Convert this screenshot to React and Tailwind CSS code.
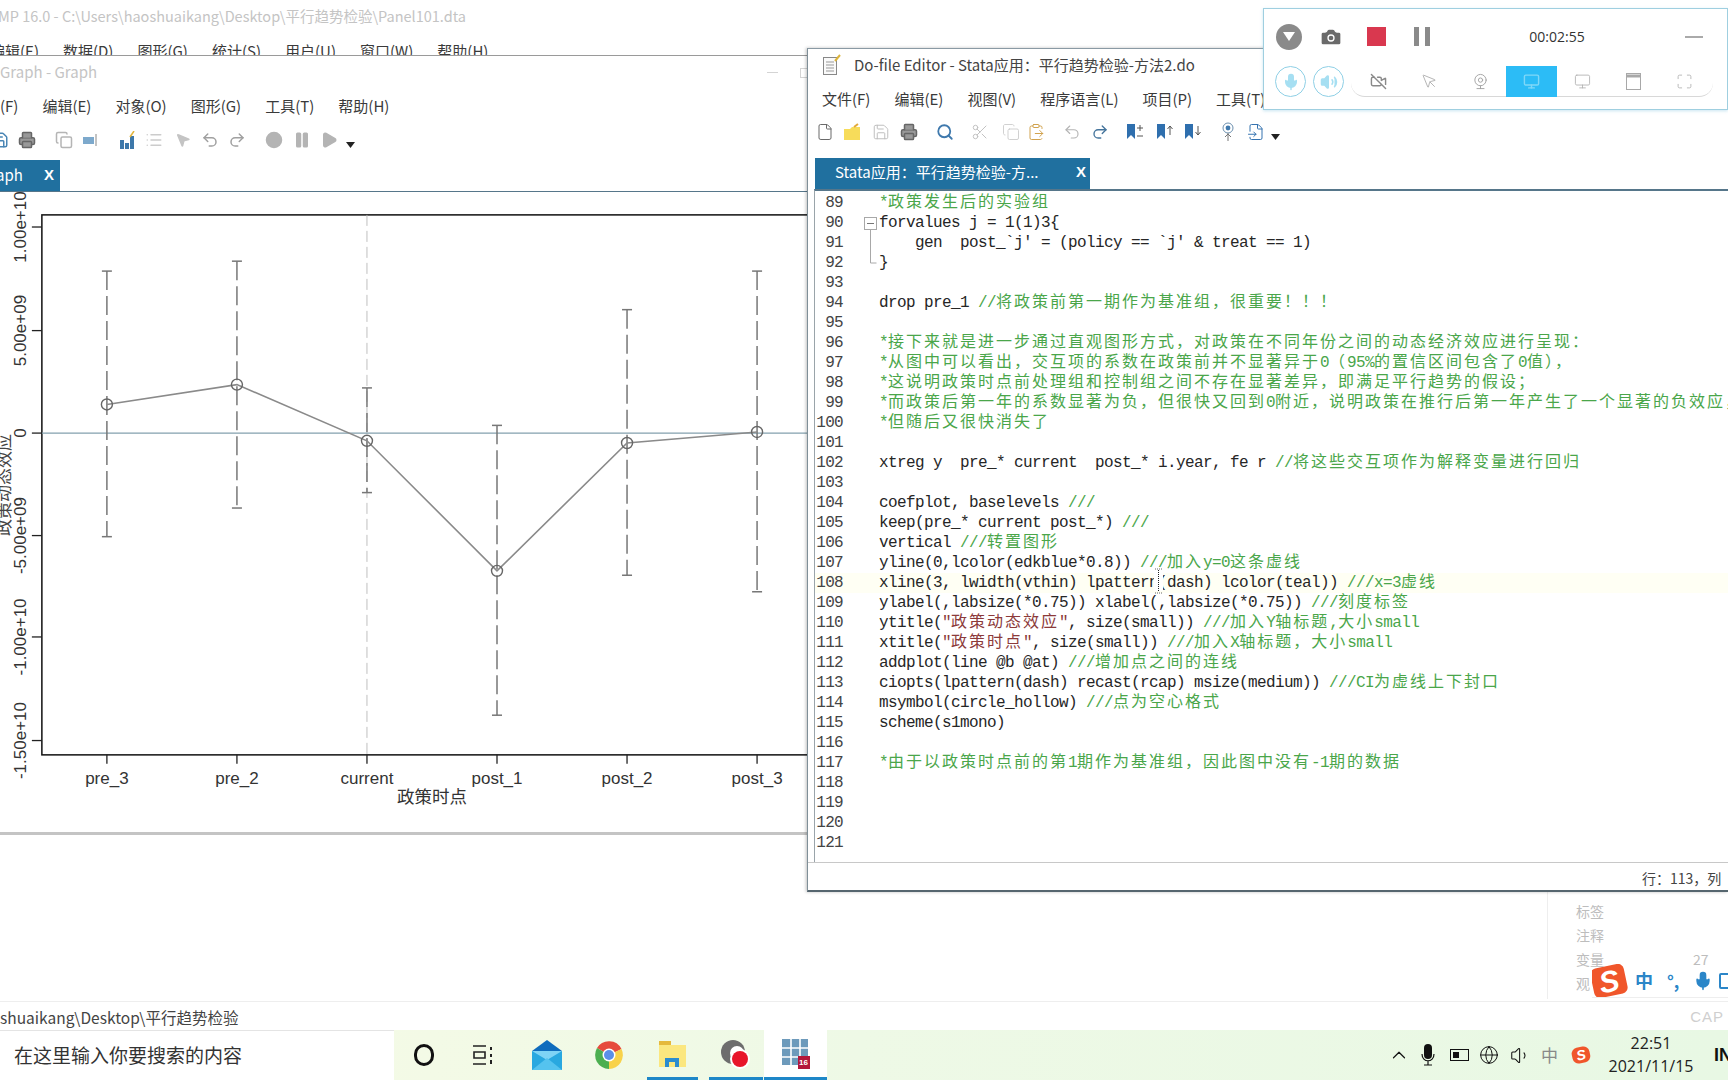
import React from "react";
import {
  File, Save, Printer, Search, Scissors, Copy, ClipboardPaste, Undo2, Redo2, Camera, Mic, Volume2, VideoOff,
  MousePointer2, Webcam, Monitor, Maximize, ChevronUp, Globe, Volume1, MousePointer, FileInput, Pause, Play, Circle, List,
} from "lucide-react";

const UI = "font-['Noto_Sans_CJK_SC','Open_Sans',sans-serif]";
const s = (v) => v * 1.102;

const CODE = [
  "*政策发生后的实验组",
  "forvalues j = 1(1)3{",
  "    gen  post_`j' = (policy == `j' & treat == 1)",
  "}",
  "",
  "drop pre_1 //将政策前第一期作为基准组，很重要！！！",
  "",
  "*接下来就是进一步通过直观图形方式，对政策在不同年份之间的动态经济效应进行呈现：",
  "*从图中可以看出，交互项的系数在政策前并不显著异于0（95%的置信区间包含了0值），",
  "*这说明政策时点前处理组和控制组之间不存在显著差异，即满足平行趋势的假设；",
  "*而政策后第一年的系数显著为负，但很快又回到0附近，说明政策在推行后第一年产生了一个显著的负效应，",
  "*但随后又很快消失了",
  "",
  "xtreg y  pre_* current  post_* i.year, fe r //将这些交互项作为解释变量进行回归",
  "",
  "coefplot, baselevels ///",
  "keep(pre_* current post_*) ///",
  "vertical ///转置图形",
  "yline(0,lcolor(edkblue*0.8)) ///加入y=0这条虚线",
  "xline(3, lwidth(vthin) lpattern(dash) lcolor(teal)) ///x=3虚线",
  "ylabel(,labsize(*0.75)) xlabel(,labsize(*0.75)) ///刻度标签",
  'ytitle("政策动态效应", size(small)) ///加入Y轴标题,大小small',
  'xtitle("政策时点", size(small)) ///加入X轴标题，大小small',
  "addplot(line @b @at) ///增加点之间的连线",
  "ciopts(lpattern(dash) recast(rcap) msize(medium)) ///CI为虚线上下封口",
  "msymbol(circle_hollow) ///点为空心格式",
  "scheme(s1mono)",
  "",
  "*由于以政策时点前的第1期作为基准组，因此图中没有-1期的数据",
  "",
  "",
  "",
  "",
];

function Runs({ text }) {
  const parts = text.split(/([\u3000-\u303f\u4e00-\u9fff\uff00-\uffef]+)/);
  return parts.map((p, i) =>
    p === "" ? null : i % 2 === 1 ? (
      <span key={i} className="font-['Noto_Sans_CJK_SC',sans-serif] text-[16px] leading-[0] tracking-[2px]">{p}</span>
    ) : (
      <span key={i} className="tracking-[-0.6px]">{p}</span>
    )
  );
}

function CodeText({ line }) {
  let code = line;
  let comment = "";
  if (line.startsWith("*")) {
    code = "";
    comment = line;
  } else {
    const k = line.indexOf("//");
    if (k >= 0) {
      code = line.slice(0, k);
      comment = line.slice(k);
    }
  }
  const bits = code.split(/("[^"]*")/);
  return (
    <>
      {bits.map((b, i) => (
        <span key={i} className={i % 2 === 1 ? "text-[#8c3a3a]" : "text-[#262626]"}>
          <Runs text={b} />
        </span>
      ))}
      {comment && (
        <span className="text-[#4aa64a]">
          <Runs text={comment} />
        </span>
      )}
    </>
  );
}

function Fold({ n }) {
  if (n === 90)
    return (
      <svg width="36" height="20" className="shrink-0">
        <rect x="21.5" y="4.5" width="12" height="12" fill="#fff" stroke="#a8a8a8" />
        <path d="M24 10.5h7" stroke="#777" />
        <path d="M27.5 17v3" stroke="#a8a8a8" />
      </svg>
    );
  if (n === 91)
    return (
      <svg width="36" height="20" className="shrink-0">
        <path d="M27.5 0v20" stroke="#a8a8a8" />
      </svg>
    );
  if (n === 92)
    return (
      <svg width="36" height="20" className="shrink-0">
        <path d="M27.5 0v10h6" fill="none" stroke="#a8a8a8" />
      </svg>
    );
  return <div className="w-[36px] shrink-0" />;
}

function Chart() {
  const xs = [97, 215, 333, 451, 569, 687];
  const names = ["pre_3", "pre_2", "current", "post_1", "post_2", "post_3"];
  const pts = [367, 349, 400, 518, 402, 392];
  const ci = [[246, 487], [237, 461], [352, 447], [386, 649], [281, 522], [246, 537]];
  const ticks = [[206, "1.00e+10"], [300, "5.00e+09"], [393, "0"], [486, "-5.00e+09"], [578, "-1.00e+10"], [672, "-1.50e+10"]];
  const Y = (v) => s(v) - 192;
  const X = (v) => s(v);
  const font = "Liberation Sans, sans-serif";
  return (
    <svg width="807" height="640" className="block">
      <rect x={X(38)} y={Y(195)} width="800" height={s(490)} fill="#fff" stroke="#111" strokeWidth="1.5" />
      <line x1={X(333)} x2={X(333)} y1={Y(195)} y2={Y(685)} stroke="#b8b8b8" strokeWidth="0.9" strokeDasharray="11 5" />
      <line x1={X(38)} x2="807" y1={Y(393)} y2={Y(393)} stroke="#83a0ae" strokeWidth="1.3" />
      {ticks.map(([y, t]) => (
        <g key={t}>
          <line x1={X(38) - 10} x2={X(38)} y1={Y(y)} y2={Y(y)} stroke="#222" strokeWidth="1.3" />
          <text transform={`translate(${X(18) + 6} ${Y(y)}) rotate(-90)`} textAnchor="middle" fontFamily={font} fontSize="17" fill="#333">{t}</text>
        </g>
      ))}
      <text transform={`translate(10 ${Y(440)}) rotate(-90)`} textAnchor="middle" fontFamily="Noto Sans CJK SC, sans-serif" fontSize="17" fill="#444">政策动态效应</text>
      {xs.map((x, i) => (
        <g key={x}>
          <line x1={X(x)} x2={X(x)} y1={Y(685)} y2={Y(685) + 9} stroke="#222" strokeWidth="1.3" />
          <text x={X(x)} y={Y(711)} textAnchor="middle" fontFamily={font} fontSize="17" fill="#333">{names[i]}</text>
          <line x1={X(x)} x2={X(x)} y1={Y(ci[i][0])} y2={Y(ci[i][1])} stroke="#777" strokeWidth="1.5" strokeDasharray="19 6" />
          <line x1={X(x) - 5} x2={X(x) + 5} y1={Y(ci[i][0])} y2={Y(ci[i][0])} stroke="#777" strokeWidth="1.5" />
          <line x1={X(x) - 5} x2={X(x) + 5} y1={Y(ci[i][1])} y2={Y(ci[i][1])} stroke="#777" strokeWidth="1.5" />
        </g>
      ))}
      <polyline points={xs.map((x, i) => `${X(x)},${Y(pts[i])}`).join(" ")} fill="none" stroke="#8a8a8a" strokeWidth="1.6" />
      {xs.map((x, i) => (
        <circle key={x} cx={X(x)} cy={Y(pts[i])} r="5.5" fill="none" stroke="#666" strokeWidth="1.4" />
      ))}
      <text x={X(392)} y={Y(729)} textAnchor="middle" fontFamily="Noto Sans CJK SC, sans-serif" fontSize="17.5" fill="#333">政策时点</text>
    </svg>
  );
}

const Caret = ({ cls }) => (
  <svg width="9" height="6" className={cls}>
    <path d="M0 0h9L4.5 6z" fill="#222" />
  </svg>
);

function Mark({ d, cls }) {
  return (
    <svg width="18" height="18" className={cls} fill="none">
      <path d="M1 1h8v15L5 12l-4 4z" fill="#2f6fae" />
      <path d={d} stroke="#555" />
    </svg>
  );
}

function Mail() {
  return (
    <svg width="32" height="30" viewBox="0 0 32 30">
      <path d="M1 11 16 0l15 11v3H1z" fill="#0f6cbd" />
      <rect x="1" y="11" width="30" height="19" fill="#7fd3f5" />
      <path d="M1 11 16 20 31 11v19H1z" fill="#29a8e0" />
      <path d="M1 30 16 18l15 12z" fill="#55c3ef" />
    </svg>
  );
}

function Chrome() {
  return (
    <svg width="28" height="28" viewBox="0 0 28 28">
      <path d="M14 14 2 7A14 14 0 0 1 26.5 8z" fill="#e64a3c" />
      <path d="M14 14 26.5 8A14 14 0 0 1 14 28z" fill="#f8d24a" />
      <path d="M14 14 14 28A14 14 0 0 1 2 7z" fill="#4caf50" />
      <circle cx="14" cy="14" r="6.5" fill="#fff" />
      <circle cx="14" cy="14" r="5" fill="#5b8fe8" />
    </svg>
  );
}

function Folder() {
  return (
    <svg width="28" height="28" viewBox="0 0 28 28">
      <rect x="1" y="1" width="12" height="5" fill="#e5b93c" />
      <rect x="1" y="5" width="27" height="22" fill="#fbe77f" />
      <path d="M7 27V18h14v9h-4v-5h-6v5z" fill="#2b8ccf" />
    </svg>
  );
}

function Rec() {
  return (
    <svg width="32" height="32" viewBox="0 0 32 32">
      <circle cx="13" cy="14" r="12" fill="#6d6d6d" />
      <circle cx="17" cy="15" r="7" fill="#fff" />
      <circle cx="20" cy="21" r="10" fill="#fff" />
      <circle cx="20" cy="21" r="8" fill="#e8152a" />
    </svg>
  );
}

function Grid16() {
  return (
    <div className="relative w-[28px] h-[30px]">
      <svg width="28" height="28" viewBox="0 0 28 28">
        <rect width="26" height="26" fill="#6d9abb" />
        <path d="M9 0v26M18 0v26M0 9h26M0 18h26" stroke="#fff" strokeWidth="1.6" />
      </svg>
      <div className="absolute right-0 bottom-0 w-[12px] h-[13px] bg-[#b3163a] text-white text-[8px] leading-[13px] text-center font-bold font-['Liberation_Sans',sans-serif]">16</div>
    </div>
  );
}

function SogouS({ cls, text }) {
  return (
    <div className={`flex items-center justify-center rounded-[6px] bg-[#f0562b] rotate-[-12deg] font-['Liberation_Sans',sans-serif] font-bold italic text-white ${cls} ${text}`}>S</div>
  );
}

const Menu = ({ items, cls }) => (
  <div className={`flex items-center gap-[24px] text-[15px] text-[#3a3a3a] ${cls}`}>
    {items.map((m) => (
      <span key={m} className="whitespace-nowrap">{m}</span>
    ))}
  </div>
);

export default function App() {
  return (
    <div className={`relative flex flex-col w-[1728px] h-[1080px] overflow-hidden bg-white ${UI}`}>
      {/* Background Stata window */}
      <div className="h-[33px] shrink-0 flex items-center -ml-[2px] pb-[2px] text-[14.5px] text-[#c4c4c4] whitespace-nowrap">MP 16.0 - C:\Users\haoshuaikang\Desktop\平行趋势检验\Panel101.dta</div>
      <div className="h-[32px] shrink-0 pt-[7px]">
        <Menu cls="-ml-[10px]" items={["编辑(E)", "数据(D)", "图形(G)", "统计(S)", "用户(U)", "窗口(W)", "帮助(H)"]} />
      </div>
      <div className="flex-1 flex justify-end items-end">
        <div className="w-[181px] h-[107px] mb-[2px] border-l border-[#eeeeee] pl-[28px] text-[14px] text-[#bdbdbd] flex flex-col">
          <div className="h-[7px] shrink-0" />
          <div className="h-[24px] leading-[24px]">标签</div>
          <div className="h-[24px] leading-[24px]">注释</div>
          <div className="h-[24px] leading-[24px] flex">变量<span className="ml-[89px]">27</span></div>
          <div className="h-[24px] leading-[24px]">观</div>
        </div>
      </div>
      <div className="h-[29px] shrink-0 border-t border-[#eeeeee] pt-[3px] flex items-center justify-between text-[15.5px] text-[#444]">
        <span>shuaikang\Desktop\平行趋势检验</span>
        <span className="text-[#cfcfcf] mr-[4px] font-['Liberation_Sans',sans-serif] text-[15px] tracking-[1px]">CAP</span>
      </div>

      {/* Taskbar */}
      <div className="h-[50px] shrink-0 flex items-stretch bg-gradient-to-r from-[#f8fbe6] via-[#eef9e6] to-[#e8f8e4]">
        <div className="w-[394px] bg-white border-t border-[#e4e4e4] flex items-center pl-[14px] text-[19px] text-[#333]">在这里输入你要搜索的内容</div>
        <div className="w-[60px] flex items-center justify-center">
          <div className="w-[20px] h-[22px] rounded-full border-[3.5px] border-[#111]" />
        </div>
        <div className="w-[58px] flex items-center justify-center">
          <svg width="22" height="22" viewBox="0 0 22 22" fill="none" stroke="#222" strokeWidth="1.6">
            <path d="M1 2h13M1 20h13M2 8h11v6H2z" />
            <path d="M19 3v3M19 10v3M19 16v4" strokeWidth="2" />
          </svg>
        </div>
        <div className="w-[70px] flex items-center justify-center"><Mail /></div>
        <div className="w-[54px] flex items-center justify-center"><Chrome /></div>
        <div className="w-[72px] flex flex-col">
          <div className="flex-1 flex items-center justify-center"><Folder /></div>
          <div className="h-[3px] ml-[11px] mr-[10px] bg-[#1e87c8]" />
        </div>
        <div className="w-[56px] flex flex-col">
          <div className="flex-1 flex items-center justify-center"><Rec /></div>
          <div className="h-[3px] mx-[1px] bg-[#1e87c8]" />
        </div>
        <div className="w-[63px] flex flex-col bg-white">
          <div className="flex-1 flex items-center justify-center"><Grid16 /></div>
          <div className="h-[3px] bg-[#1e87c8]" />
        </div>
        <div className="flex-1 flex items-center justify-end text-[#111]">
          <ChevronUp size={22} strokeWidth={1.3} className="mr-[10px]" />
          <svg width="16" height="24" viewBox="0 0 16 24" className="mr-[7px]">
            <rect x="4" y="1" width="8" height="15" rx="4" fill="#111" />
            <path d="M2 11c0 9 12 9 12 0M8 18v4M4 22h8" fill="none" stroke="#111" strokeWidth="1.2" />
          </svg>
          <svg width="20" height="12" className="ml-[7px] mr-[9px]">
            <rect x=".5" y=".5" width="18" height="11" fill="none" stroke="#111" />
            <rect x="3" y="3" width="6" height="6" fill="#111" />
          </svg>
          <Globe size={20} strokeWidth={1.2} className="mr-[11px]" />
          <Volume1 size={21} strokeWidth={1.2} className="mr-[10px]" />
          <span className="text-[17px] text-[#888] mr-[14px]">中</span>
          <SogouS cls="w-[18px] h-[16px] mr-[19px]" text="text-[14px]" />
          <div className="w-[84px] flex flex-col items-center text-[16px] leading-[23px] text-[#222] font-['Open_Sans',sans-serif]">
            <span>22:51</span>
            <span>2021/11/15</span>
          </div>
          <span className="ml-[21px] w-[14px] overflow-hidden text-[18px] font-bold text-[#111] font-['Liberation_Sans',sans-serif]">IN</span>
        </div>
      </div>

      {/* Graph window */}
      <div className="absolute left-0 top-[55px] w-[807px] h-[780px] flex flex-col bg-white border-t border-[#9a9a9a] border-b-[3px] border-b-[#c4c4c4] overflow-hidden">
        <div className="h-[35px] shrink-0 flex items-center pb-[2px] text-[15px] text-[#c4c4c4] whitespace-nowrap justify-between">
          <span>Graph - Graph</span>
          <span className="flex items-center gap-[22px] -mr-[2px]">
            <span className="w-[11px] h-[1.5px] bg-[#d4d4d4]" />
            <span className="w-[9px] h-[10px] border border-[#d4d4d4]" />
          </span>
        </div>
        <div className="h-[32px] shrink-0 flex items-center pb-[2px]">
          <Menu cls="-ml-[30px]" items={["文件(F)", "编辑(E)", "对象(O)", "图形(G)", "工具(T)", "帮助(H)"]} />
        </div>
        <div className="h-[37px] shrink-0 flex items-center -ml-[9px] pb-[4px] text-[#8a8a8a]">
          <Save size={18} className="text-[#4a86b5]" />
          <Printer size={18} className="ml-[9px] text-[#666]" fill="#999" />
          <Copy size={18} className="ml-[19px] text-[#b5b5b5]" />
          <svg width="18" height="18" className="ml-[8px]"><rect x="2" y="6" width="11" height="7" fill="#7da9cc" /><path d="M15 3v12" stroke="#888" /></svg>
          <svg width="18" height="18" className="ml-[19px]"><path d="M2 9h4v9H2zM7 12h4v6H7zM12 5h4v13h-4z" fill="#3d78aa" /><path d="M12 6l4-6" stroke="#e4b53c" strokeWidth="1.5" /></svg>
          <List size={18} className="ml-[9px] text-[#cccccc]" />
          <MousePointer2 size={16} className="ml-[12px] text-[#c4c4c4]" fill="#c4c4c4" />
          <Undo2 size={18} className="ml-[10px] text-[#a0a0a0]" />
          <Redo2 size={18} className="ml-[9px] text-[#a0a0a0]" />
          <Circle size={18} className="ml-[19px] text-[#b4b4b4]" fill="#b4b4b4" />
          <Pause size={18} className="ml-[10px] text-[#b4b4b4]" fill="#b4b4b4" />
          <Play size={18} className="ml-[9px] text-[#b4b4b4]" fill="#b4b4b4" />
          <Caret cls="ml-[8px] mt-[10px]" />
        </div>
        <div className="h-[31px] shrink-0 flex">
          <div className="w-[60px] bg-[#20709f] text-white flex items-center justify-between pr-[6px] text-[15px] overflow-hidden">
            <span className="-ml-[4px]">aph</span>
            <span className="font-bold text-[15px] font-['Liberation_Sans',sans-serif]">X</span>
          </div>
        </div>
        <div className="flex-1 min-h-0 border-t border-[#56768a] overflow-hidden">
          <Chart />
        </div>
      </div>

      {/* Do-file editor window */}
      <div className="absolute left-[807px] top-[48px] w-[921px] h-[844px] flex flex-col bg-white border-l border-t border-b-2 border-l-[#7f8f98] border-t-[#8a9aa4] border-b-[#56666f] shadow-[-1px_0_3px_rgba(0,0,0,0.25)]">
        <div className="h-[36px] shrink-0 flex items-center pl-[15px] pb-[4px] text-[15px] text-[#444]">
          <svg width="18" height="22" viewBox="0 0 18 22" fill="none" className="mr-[13px]">
            <rect x=".5" y="3.5" width="13" height="17" stroke="#888" fill="#fafafa" />
            <path d="M3 8h8M3 11h8M3 14h8M3 17h8" stroke="#999" />
            <path d="M12 7l5-6" stroke="#dcb43c" strokeWidth="2" />
          </svg>
          <span>Do-file Editor - Stata应用：平行趋势检验-方法2.do</span>
        </div>
        <div className="h-[32px] shrink-0 flex items-center pb-[4px]">
          <Menu cls="ml-[14px]" items={["文件(F)", "编辑(E)", "视图(V)", "程序语言(L)", "项目(P)", "工具(T)"]} />
        </div>
        <div className="h-[41px] shrink-0 flex items-center pl-[8px] pb-[12px] text-[#777]">
          <File size={18} strokeWidth={1.3} className="text-[#666]" />
          <svg width="18" height="18" className="ml-[9px]"><path d="M1 6h6l2-2h8v13H1z" fill="#f7dc5a" /><path d="M11 4l4-3" stroke="#e2a93a" strokeWidth="2" /></svg>
          <Save size={18} strokeWidth={1.3} className="ml-[11px] text-[#bdbdbd]" />
          <Printer size={18} className="ml-[10px] text-[#666]" fill="#999" />
          <Search size={18} strokeWidth={2.4} className="ml-[18px] text-[#3f79ad]" />
          <Scissors size={18} strokeWidth={1.3} className="ml-[17px] text-[#c0c0c0]" />
          <Copy size={18} strokeWidth={1.2} className="ml-[13px] text-[#cccccc]" />
          <ClipboardPaste size={18} strokeWidth={1.3} className="ml-[7px] text-[#d0a04a]" />
          <Undo2 size={18} strokeWidth={1.5} className="ml-[18px] text-[#b4b4b4]" />
          <Redo2 size={18} strokeWidth={1.8} className="ml-[10px] text-[#44749c]" />
          <Mark cls="ml-[17px]" d="M11 5h6M14 2v6M11 13h6" />
          <Mark cls="ml-[12px]" d="M14 12V3M11.5 6 14 3l2.5 3" />
          <Mark cls="ml-[10px]" d="M14 3v9M11.5 9 14 12l2.5-3" />
          <svg width="18" height="20" className="ml-[17px]" fill="none"><circle cx="9" cy="6" r="5" stroke="#6b8fae" /><circle cx="9" cy="6" r="2.4" fill="#3f79ad" /><path d="M9 11v8M6 15l3-3 3 3" stroke="#777" /></svg>
          <FileInput size={18} strokeWidth={1.3} className="ml-[10px] text-[#2f6fae]" />
          <Caret cls="ml-[6px] mt-[10px]" />
        </div>
        <div className="h-[31px] shrink-0 pl-[7px] flex">
          <div className="w-[275px] bg-[#20709f] text-white flex items-center justify-between pl-[20px] pr-[4px] pb-[2px] text-[15px]">
            <span>Stata应用：平行趋势检验-方...</span>
            <span className="font-bold text-[15px] font-['Liberation_Sans',sans-serif]">X</span>
          </div>
        </div>
        <div className="ml-[6px] h-[673px] shrink-0 border-t-2 border-t-[#56768a] border-l border-l-[#9aa4aa] pt-[2px] overflow-hidden font-['Liberation_Mono',monospace] text-[16px]">
          {CODE.map((line, i) => {
            const n = 89 + i;
            return (
              <div key={n} className={`relative flex h-[20px] leading-[20px] whitespace-pre ${n === 108 ? "bg-[#fffff4]" : ""}`}>
                <div className="w-[28px] shrink-0 text-right text-[#444] tracking-[-0.7px]">{n}</div>
                <Fold n={n} />
                <div className="flex-1 overflow-hidden"><CodeText line={line} /></div>
                {n === 108 && (
                  <svg width="12" height="28" className="absolute left-[338px] -top-[6px]">
                    <rect x="1" y="4" width="9" height="20" fill="#fff" />
                    <path d="M2 2h7M2 26h7" stroke="#666" strokeDasharray="1 1" />
                    <path d="M5.5 3v22" stroke="#222" strokeDasharray="1 1" />
                  </svg>
                )}
              </div>
            );
          })}
        </div>
        <div className="flex-1 border-t border-[#c8c8c8] flex items-center justify-end pr-[2px] pt-[3px] text-[14px] text-[#444] whitespace-nowrap overflow-hidden">
          <span className="w-[84px]">行：113，列</span>
        </div>
      </div>

      {/* Recorder toolbar */}
      <div className="absolute left-[1263px] top-[8px] w-[465px] h-[102px] flex flex-col bg-white border border-[#9fcfe0] shadow-[0_1px_3px_rgba(120,190,220,0.4)]">
        <div className="h-[56px] shrink-0 flex items-center pb-[1px]">
          <div className="ml-[12px] w-[26px] h-[26px] rounded-full bg-[#8a8a8a] flex items-center justify-center">
            <svg width="12" height="9"><path d="M0 0h12L6 9z" fill="#fff" /></svg>
          </div>
          <Camera size={24} className="ml-[17px] text-[#6a6a6a]" fill="#6a6a6a" stroke="#fff" strokeWidth={1.3} />
          <div className="ml-[24px] w-[19px] h-[19px] bg-[#d9384f]" />
          <div className="ml-[28px] flex gap-[6px]">
            <div className="w-[5px] h-[19px] bg-[#8a8a8a]" />
            <div className="w-[5px] h-[19px] bg-[#8a8a8a]" />
          </div>
          <span className="ml-[97px] w-[60px] text-center text-[14px] text-[#333] font-['Open_Sans',sans-serif]">00:02:55</span>
          <div className="ml-[98px] w-[18px] h-[2px] bg-[#aaaaaa]" />
        </div>
        <div className="flex items-start pt-[1px]">
          <div className="ml-[11px] w-[31px] h-[31px] rounded-full border border-[#8fd0e6] flex items-center justify-center">
            <Mic size={18} className="text-[#a6dff2]" fill="#a6dff2" />
          </div>
          <div className="ml-[7px] w-[31px] h-[31px] rounded-full border border-[#8fd0e6] flex items-center justify-center">
            <Volume2 size={18} className="text-[#a6dff2]" fill="#a6dff2" />
          </div>
          <div className="ml-[7px] w-[362px] h-[31px] pl-[2px] rounded-b-[14px] rounded-t-[4px] border-b border-[#d8d8d8] grid grid-cols-[repeat(7,51px)] items-center justify-items-center">
            <VideoOff size={17} className="text-[#8a8a8a]" />
            <MousePointer size={17} strokeWidth={1.2} className="text-[#a8a8a8]" />
            <Webcam size={17} strokeWidth={1.3} className="text-[#a0a0a0]" />
            <div className="w-[51px] h-[31px] bg-[#2cbcf6] flex items-center justify-center">
              <Monitor size={17} className="text-[#7fd7f8]" />
            </div>
            <Monitor size={17} strokeWidth={1.2} className="text-[#b0b0b0]" />
            <svg width="15" height="17" fill="none"><rect x=".5" y=".5" width="14" height="16" stroke="#a8a8a8" /><path d="M0 3h15" stroke="#a8a8a8" strokeWidth="3" /></svg>
            <Maximize size={17} strokeWidth={1.2} className="text-[#b0b0b0]" />
          </div>
        </div>
      </div>

      {/* Sogou IME bar */}
      <div className="absolute left-[1592px] top-[964px] w-[136px] h-[34px] flex items-center border-b border-[#eeeeee] overflow-hidden">
        <SogouS cls="w-[34px] h-[30px] shrink-0" text="text-[30px]" />
        <span className="ml-[9px] text-[18px] font-bold text-[#2b86c8]">中</span>
        <span className="ml-[14px] text-[17px] font-bold text-[#2b86c8] leading-none">°,</span>
        <Mic size={20} strokeWidth={2} className="ml-[14px] shrink-0 text-[#2b86c8]" fill="#2b86c8" />
        <span className="ml-[6px] w-[14px] h-[16px] shrink-0 border-2 border-[#2b86c8] rounded-[2px]" />
      </div>
    </div>
  );
}
